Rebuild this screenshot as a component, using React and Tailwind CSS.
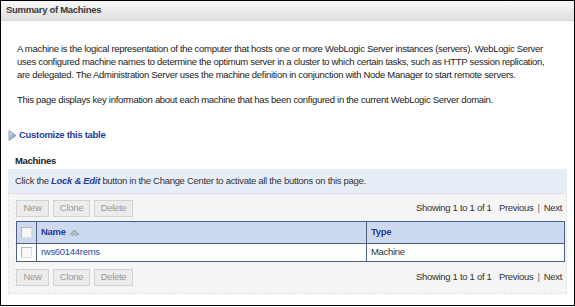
import React from "react";

function Btn({ children, w }) {
  return (
    <span
      className={`flex h-[17px] items-center justify-center border border-[#d2d2d2] bg-[#ececec] text-[#9a9a9a] ${w}`}
    >
      {children}
    </span>
  );
}

function Toolbar() {
  return (
    <div className="flex items-center justify-between pl-[7px] pr-[4px]">
      <div className="flex gap-[4px]">
        <Btn w="w-[33px]">New</Btn>
        <Btn w="w-[37px]">Clone</Btn>
        <Btn w="w-[39px]">Delete</Btn>
      </div>
      <div className="text-[#333]">
        Showing 1 to 1 of 1 <span className="ml-[5px]">Previous</span>
        <span className="mx-[4px] text-[#666]">|</span>Next
      </div>
    </div>
  );
}

function Check() {
  return <span className="block h-[11px] w-[11px] border border-[#b5b5b5] border-r-[#e0e0e0] border-b-[#e0e0e0] bg-[#f7f7f7]" />;
}

export default function App() {
  return (
    <div className="h-[307px] w-[575px] bg-white font-['Liberation_Sans',Arial,sans-serif] text-[9.5px] tracking-[-0.3px]">
      <div className="flex h-[306px] flex-col border border-black bg-white">
        <div className="flex h-[20px] items-center border-b border-[#d6d6d6] bg-gradient-to-b from-[#f8f8f8] to-[#e0e0e0] pl-[5px] font-bold text-[#3a3a3a]">
          Summary of Machines
        </div>

        <div className="mt-[21px] px-[16px] leading-[13px] text-[#222]">
          <p>
            A machine is the logical representation of the computer that hosts one or more WebLogic Server instances (servers). WebLogic Server uses configured machine names to determine the optimum server in a cluster to which certain tasks, such as HTTP session replication, are delegated. The Administration Server uses the machine definition in conjunction with Node Manager to start remote servers.
          </p>
          <p className="mt-[12px]">
            This page displays key information about each machine that has been configured in the current WebLogic Server domain.
          </p>
        </div>

        <div className="mt-[23px] flex h-[13px] items-center pl-[7px] font-bold text-[#1f3d99]">
          <svg width="9" height="11" viewBox="0 0 9 11" className="mr-[2px]">
            <defs>
              <linearGradient id="tri" x1="0" y1="0" x2="1" y2="1">
                <stop offset="0" stopColor="#dfe6f4" />
                <stop offset="1" stopColor="#6d82b8" />
              </linearGradient>
            </defs>
            <path d="M1 0.5 L8 5.5 L1 10.5 Z" fill="url(#tri)" stroke="#7f8fb8" strokeWidth="0.8" />
          </svg>
          Customize this table
        </div>

        <div className="mt-[12px] h-[13px] pl-[14px] font-bold leading-[13px] text-[#222]">Machines</div>

        <div className="mx-[7px] mt-[2px]">
          <div className="flex h-[25px] items-center border-b border-[#dde2ea] bg-[#e8eef8] pl-[7px] text-[#333]">
            Click the&nbsp;<i className="font-bold text-[#1f3d99]">Lock &amp; Edit</i>&nbsp;button in the Change Center to activate all the buttons on this page.
          </div>
          <div className="flex h-[100px] flex-col border border-t-0 border-dashed border-[#e2e2e2] bg-[#f5f5f5] pt-[6px]">
            <Toolbar />
            <table className="ml-[7px] mt-[4px] w-[549px] border-collapse border border-[#4f5f80]">
              <thead>
                <tr className="h-[22px] bg-[#cdd9ef]">
                  <th className="w-[20px] border border-[#4f5f80] px-[4px]">
                    <Check />
                  </th>
                  <th className="w-[330px] border border-[#4f5f80] px-[4px] text-left font-bold text-[#1f3d99]">
                    <span className="flex items-center gap-[3px]">
                      Name
                      <svg width="11" height="8" viewBox="0 0 11 8">
                        <path d="M1 6 L5.5 1.5 L10 6 M3 7 L5.5 4.5 L8 7" fill="none" stroke="#9aa4b8" strokeWidth="1.3" />
                      </svg>
                    </span>
                  </th>
                  <th className="border border-[#4f5f80] px-[4px] text-left font-bold text-[#1f3d99]">Type</th>
                </tr>
              </thead>
              <tbody>
                <tr className="h-[18px] bg-white">
                  <td className="border border-[#4f5f80] px-[4px]">
                    <Check />
                  </td>
                  <td className="border border-[#4f5f80] px-[4px] text-[#2b4aa3]">rws60144rems</td>
                  <td className="border border-[#4f5f80] px-[4px] text-[#333]">Machine</td>
                </tr>
              </tbody>
            </table>
            <div className="mt-[7px]">
              <Toolbar />
            </div>
          </div>
        </div>
      </div>
    </div>
  );
}
